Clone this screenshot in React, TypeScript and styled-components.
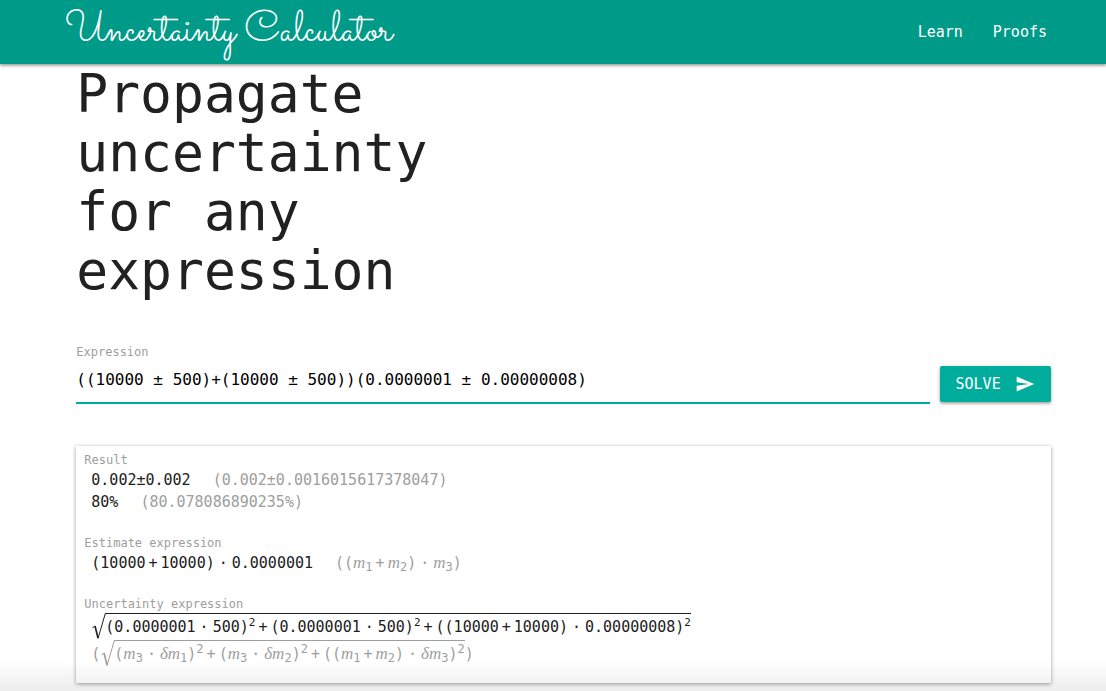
import React, { useState } from "react";
import styled, { createGlobalStyle } from "styled-components";

const teal = "#009a89";
const accent = "#00ad9c";
const muted = "#9e9e9e";
const ink = "#212121";

const GlobalStyle = createGlobalStyle`
  *, *::before, *::after { box-sizing: border-box; }
  body {
    margin: 0;
    background: #fff;
    color: ${ink};
    font-family: "DejaVu Sans Mono", "Liberation Mono", monospace;
    font-size: 15px;
    line-height: 22px;
  }
`;

const Header = styled.header`
  display: flex;
  align-items: center;
  justify-content: space-between;
  height: 64px;
  padding: 0 59px 0 65px;
  background: ${teal};
  box-shadow: 0 2px 2px rgba(0, 0, 0, 0.2), 0 1px 4px rgba(0, 0, 0, 0.25);
`;

const Brand = styled.a`
  color: #fff;
  font-family: "Sacramento", "Lato", sans-serif;
  font-size: 42px;
  font-weight: 400;
  line-height: 64px;
  text-decoration: none;
  white-space: nowrap;
`;

const Nav = styled.nav`
  display: flex;
  gap: 30px;
`;

const NavLink = styled.a`
  color: #fff;
  text-decoration: none;
`;

const Main = styled.main`
  width: 90%;
  margin: 0 auto;
  padding: 0 0 8px 21px;
`;

const Title = styled.h1`
  width: 42%;
  margin: 0;
  font-size: 53px;
  font-weight: 400;
  line-height: 59px;
`;

const Form = styled.form`
  display: flex;
  align-items: flex-end;
  gap: 10px;
  margin: 44px 0 42px;
`;

const Field = styled.div`
  display: flex;
  flex: 1;
  flex-direction: column;
`;

const FieldLabel = styled.label`
  color: ${muted};
  font-size: 12px;
  line-height: 16px;
`;

const TextInput = styled.input`
  width: 100%;
  height: 44px;
  padding: 0 0 3px;
  border: 0;
  border-bottom: 2px solid ${accent};
  border-radius: 0;
  outline: 0;
  background: transparent;
  color: #000;
  font-family: inherit;
  font-size: 16px;
`;

const SolveButton = styled.button`
  display: flex;
  align-items: center;
  gap: 14px;
  height: 36px;
  margin-bottom: 2px;
  padding: 0 16px;
  border: 0;
  border-radius: 2px;
  background: ${accent};
  color: #fff;
  font-family: inherit;
  font-size: 15px;
  text-transform: uppercase;
  cursor: pointer;
  box-shadow: 0 2px 2px rgba(0, 0, 0, 0.16), 0 1px 4px rgba(0, 0, 0, 0.25);
`;

const Card = styled.section`
  display: flex;
  flex-direction: column;
  gap: 21px;
  padding: 5px 8px 18px;
  background: #fff;
  box-shadow: 0 1px 4px rgba(0, 0, 0, 0.4);
`;

const GroupLabel = styled.h2`
  margin: 0;
  color: ${muted};
  font-size: 12px;
  font-weight: 400;
  line-height: 18px;
`;

const Row = styled.div`
  display: flex;
  gap: 22px;
  padding-left: 7px;
  white-space: nowrap;
`;

const Stack = styled.div`
  display: flex;
  flex-direction: column;
  gap: 2px;
`;

const Detail = styled.span`
  color: ${muted};
`;

const Op = styled.span<{ $gap: number }>`
  margin: 0 ${(p) => p.$gap}px;
`;

const Variable = styled.i`
  font-family: "Liberation Serif", serif;
  font-size: 17px;
  line-height: 0;
`;

const Sub = styled.sub`
  position: relative;
  top: 3px;
  font-size: 12px;
  line-height: 0;
  vertical-align: baseline;
`;

const Sup = styled.sup<{ $large?: boolean }>`
  position: relative;
  top: -6px;
  font-size: ${(p) => (p.$large ? 12 : 11)}px;
  line-height: 0;
  vertical-align: baseline;
`;

const Formula = styled.div<{ $muted?: boolean }>`
  display: flex;
  align-items: flex-end;
  padding-left: 7px;
  color: ${(p) => (p.$muted ? muted : ink)};
  white-space: nowrap;
`;

const RadicalSign = styled.svg`
  width: 14px;
  height: 26px;
  margin-bottom: -1px;
  flex: none;
  overflow: visible;
  fill: none;
  stroke: currentColor;
`;

const Radicand = styled.span`
  padding-top: 2px;
  border-top: 1px solid currentColor;
`;

const BottomFade = styled.div`
  position: fixed;
  right: 0;
  bottom: 0;
  left: 0;
  height: 30px;
  background: linear-gradient(rgba(0, 0, 0, 0), rgba(0, 0, 0, 0.07));
  pointer-events: none;
`;

const Plus = () => <Op $gap={3}>+</Op>;
const Dot = () => <Op $gap={4}>·</Op>;

const M = ({ n, delta }: { n: number; delta?: boolean }) => (
  <>
    <Variable>{delta ? "δm" : "m"}</Variable>
    <Sub>{n}</Sub>
  </>
);

const Root = ({ children }: { children: React.ReactNode }) => (
  <>
    <RadicalSign viewBox="0 0 14 26" aria-hidden="true">
      <path d="M1.5 14.8L4 13" strokeWidth="1" />
      <path d="M4 13L7 25" strokeWidth="1.7" />
      <path d="M7 25.5L14.3 0.5" strokeWidth="1" />
    </RadicalSign>
    <Radicand>{children}</Radicand>
  </>
);

export default function App() {
  const [expression, setExpression] = useState(
    "((10000 ± 500)+(10000 ± 500))(0.0000001 ± 0.00000008)"
  );

  return (
    <>
      <GlobalStyle />
      <Header>
        <Brand href="#">Uncertainty Calculator</Brand>
        <Nav>
          <NavLink href="#learn">Learn</NavLink>
          <NavLink href="#proofs">Proofs</NavLink>
        </Nav>
      </Header>
      <Main>
        <Title>Propagate uncertainty for any expression</Title>
        <Form onSubmit={(e) => e.preventDefault()}>
          <Field>
            <FieldLabel htmlFor="expression">Expression</FieldLabel>
            <TextInput
              id="expression"
              type="text"
              spellCheck={false}
              value={expression}
              onChange={(e) => setExpression(e.target.value)}
            />
          </Field>
          <SolveButton type="submit">
            Solve
            <svg width="20" height="20" viewBox="0 0 24 24" fill="currentColor" aria-hidden="true">
              <path d="M2.01 21L23 12 2.01 3 2 10l15 2-15 2z" />
            </svg>
          </SolveButton>
        </Form>
        <Card>
          <div>
            <GroupLabel>Result</GroupLabel>
            <Row>
              <span>0.002±0.002</span>
              <Detail>(0.002±0.0016015617378047)</Detail>
            </Row>
            <Row>
              <span>80%</span>
              <Detail>(80.078086890235%)</Detail>
            </Row>
          </div>
          <div>
            <GroupLabel>Estimate expression</GroupLabel>
            <Row>
              <span>
                (10000<Plus />10000)<Dot />0.0000001
              </span>
              <Detail>
                ((<M n={1} /><Plus /><M n={2} />)<Dot /><M n={3} />)
              </Detail>
            </Row>
          </div>
          <div>
            <GroupLabel>Uncertainty expression</GroupLabel>
            <Stack>
              <Formula>
                <Root>
                  (0.0000001<Dot />500)<Sup>2</Sup><Plus />
                  (0.0000001<Dot />500)<Sup>2</Sup><Plus />
                  ((10000<Plus />10000)<Dot />0.00000008)<Sup>2</Sup>
                </Root>
              </Formula>
              <Formula $muted>
                (
                <Root>
                  (<M n={3} /><Dot /><M n={1} delta />)<Sup $large>2</Sup><Plus />
                  (<M n={3} /><Dot /><M n={2} delta />)<Sup $large>2</Sup><Plus />
                  ((<M n={1} /><Plus /><M n={2} />)<Dot /><M n={3} delta />)<Sup $large>2</Sup>
                </Root>
                )
              </Formula>
            </Stack>
          </div>
        </Card>
      </Main>
      <BottomFade />
    </>
  );
}
